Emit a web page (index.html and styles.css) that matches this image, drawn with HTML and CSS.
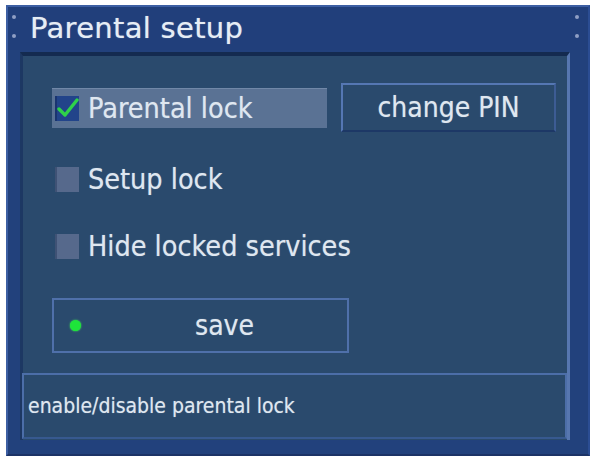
FILE: index.html
```html
<!DOCTYPE html>
<html lang="en">
<head>
<meta charset="utf-8">
<title>Parental setup</title>
<link rel="stylesheet" href="styles.css">
</head>
<body>
<div class="window">
  <div class="titlebar">
    <span class="dots"><i></i><i></i></span>
    <h1 class="title">Parental setup</h1>
    <span class="dots dots-right"><i></i><i></i></span>
  </div>
  <div class="panel">
    <div class="options">
      <div class="row-top">
        <div class="option selected">
          <span class="check checked">
            <svg viewBox="0 0 22 22" width="22" height="22"><path d="M2 12 L8 18 L20 3" fill="none" stroke="#2fd24a" stroke-width="3.4" stroke-linecap="round" stroke-linejoin="round"/></svg>
          </span>
          <span class="label">Parental lock</span>
        </div>
        <div class="btn btn-pin">change PIN</div>
      </div>
      <div class="option">
        <span class="check"></span>
        <span class="label">Setup lock</span>
      </div>
      <div class="option">
        <span class="check"></span>
        <span class="label">Hide locked services</span>
      </div>
      <div class="btn btn-save"><span class="led"></span><span class="btn-text">save</span></div>
    </div>
    <div class="status">enable/disable parental lock</div>
  </div>
</div>
</body>
</html>
```
FILE: styles.css
```css
html, body {
  margin: 0;
  padding: 0;
  background: #ffffff;
}
body {
  font-family: "DejaVu Sans Condensed", "DejaVu Sans", sans-serif;
  font-stretch: condensed;
  color: #dfe7f0;
}
.window {
  margin: 5px 3px 0 6px;
  width: 584px;
  height: 451px;
  box-sizing: border-box;
  background: #22417c;
  border: 2px solid #3d5fa3;
  border-right-color: #2b4d93;
  border-bottom-color: #1c3366;
  display: flex;
  flex-direction: column;
}
.titlebar {
  height: 43px;
  display: flex;
  align-items: center;
  position: relative;
  background: #213f7b;
}
.title {
  margin: -2px 0 0 22px;
  font-family: "DejaVu Sans", sans-serif;
  font-stretch: normal;
  font-size: 29px;
  font-weight: normal;
  letter-spacing: 0.3px;
  color: #e6edf5;
  text-shadow: 0 0 1px rgba(230, 237, 245, 0.6);
}
.dots {
  position: absolute;
  left: 4px;
  top: 8px;
  display: flex;
  flex-direction: column;
  gap: 15px;
}
.dots-right { left: auto; right: 9px; }
.dots i {
  display: block;
  width: 4px;
  height: 4px;
  border-radius: 50%;
  background: #8f9fc4;
}
.panel {
  flex: 1;
  margin: 2px 18px 14px 12px;
  background: #2a4a6d;
  border-top: 4px solid #142b50;
  border-left: 3px solid #1d3863;
  border-right: 3px solid #5777b0;
  display: flex;
  flex-direction: column;
}
.options {
  flex: 1;
  padding: 27px 0 0 29px;
  display: flex;
  flex-direction: column;
}
.row-top {
  display: flex;
  align-items: center;
  gap: 14px;
}
.option {
  display: flex;
  align-items: center;
  height: 40px;
  width: 275px;
  box-sizing: border-box;
  padding-left: 3px;
}
.option + .option { margin-top: 27px; }
.row-top + .option { margin-top: 27px; }
.option.selected {
  background: #5a7294;
  border-top: 1px solid #7188a8;
}
.check {
  width: 24px;
  height: 25px;
  background: #56698c;
  border-left: 2px solid #3f5275;
  box-sizing: border-box;
  margin-right: 9px;
  display: flex;
  align-items: center;
  justify-content: center;
  flex: none;
}
.check.checked { background: #22448a; border-left-color: #1a3570; }
.check svg { flex: none; }
.label {
  font-size: 28.5px;
  white-space: nowrap;
  text-shadow: 0 0 1px rgba(223, 231, 240, 0.5);
}
.btn {
  box-sizing: border-box;
  border: 2px solid #4e6fa8;
  display: flex;
  align-items: center;
  justify-content: center;
  font-size: 28px;
  text-shadow: 0 0 1px rgba(223, 231, 240, 0.5);
}
.btn-pin {
  width: 215px;
  height: 49px;
  border-color: #5577b3;
  border-right-color: #3d5c94;
  border-bottom-color: #1d3866;
}
.btn-save {
  margin-top: 32px;
  width: 297px;
  height: 55px;
  position: relative;
  padding-left: 48px;
  border-color: #4f70aa;
}
.led {
  position: absolute;
  left: 16px;
  top: 20px;
  width: 11px;
  height: 11px;
  border-radius: 50%;
  background: #1ee53a;
  box-shadow: 0 0 2px #3df055;
}
.status {
  margin: 0 0 1px -1px;
  height: 66px;
  box-sizing: border-box;
  border: 2px solid #4c6ea8;
  border-bottom-color: #37598f;
  display: flex;
  align-items: center;
  padding-left: 4px;
  font-size: 21px;
  background: #2a4a6d;
  text-shadow: 0 0 1px rgba(223, 231, 240, 0.5);
}
```
